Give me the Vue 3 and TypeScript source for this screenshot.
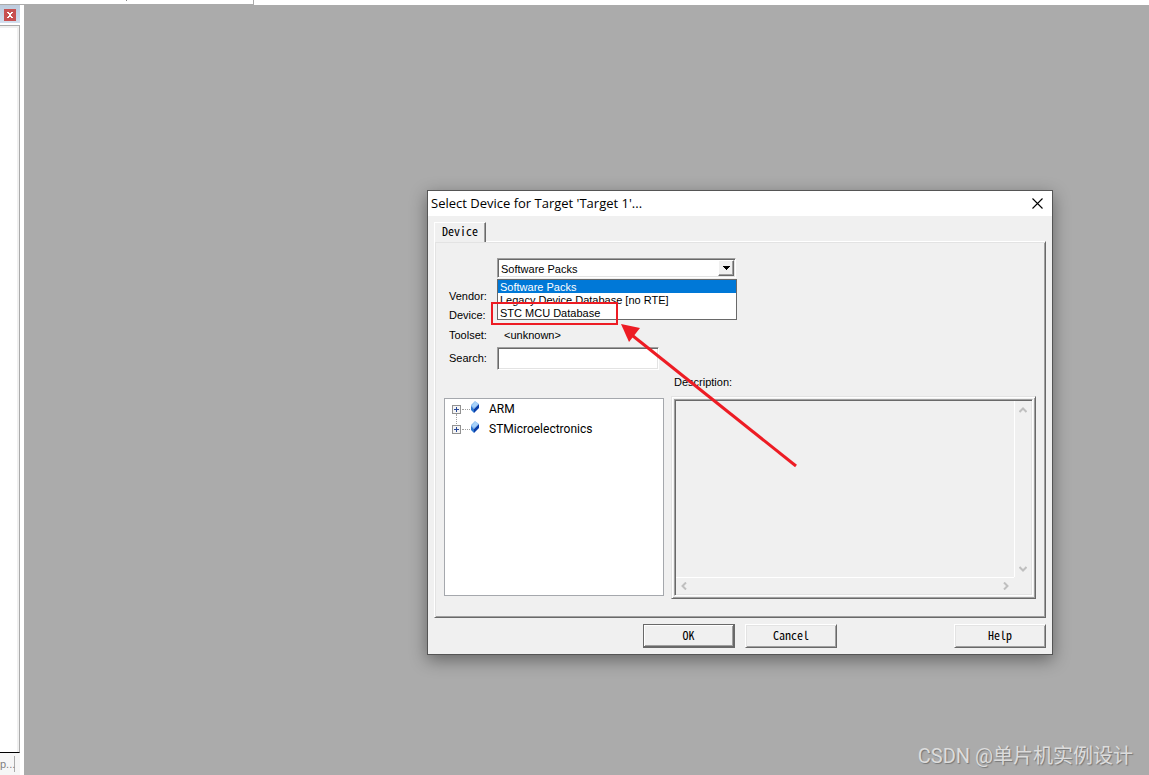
<script setup lang="ts">
import { ref } from 'vue'

const databases = ['Software Packs', 'Legacy Device Database [no RTE]', 'STC MCU Database']
const database = ref(databases[0])
const search = ref('')
const description = ref('')
const vendors = ['ARM', 'STMicroelectronics']
</script>

<template>
  <div class="app">
    <header class="toolbar"><span class="toolbar-part"></span></header>
    <div class="workspace">
      <aside class="dock">
        <div class="dock-title">
          <button class="dock-close" type="button" aria-label="Close panel">
            <svg width="12" height="12" viewBox="0 0 12 12" shape-rendering="crispEdges">
              <path d="M3 3h2v1h2V3h2v1H8v1H7v2h1v1h1v1H7V8H5v1H3V8h1V7h1V5H4V4H3z" fill="#fff" />
            </svg>
          </button>
        </div>
        <div class="dock-body"></div>
        <div class="dock-tabs"><span class="dock-tab">p...</span></div>
      </aside>

      <main class="desktop">
        <section class="dialog" role="dialog" aria-labelledby="dialog-title">
          <div class="titlebar">
            <h1 id="dialog-title">Select Device for Target 'Target 1'...</h1>
            <button class="close" type="button" aria-label="Close">
              <svg width="11" height="11" viewBox="0 0 11 11">
                <path d="M.5 .5l10 10M10.500 .5l-10 10" stroke="#000" stroke-width="1.100" />
              </svg>
            </button>
          </div>

          <div class="body">
            <button class="tab" type="button" role="tab" aria-selected="true">Device</button>
            <div class="panel">
              <div class="form">
                <div class="combo">
                  <select v-model="database" aria-label="Database">
                    <option v-for="d in databases" :key="d">{{ d }}</option>
                  </select>
                  <span class="combo-arrow">
                    <svg width="7" height="4" viewBox="0 0 7 4" shape-rendering="crispEdges">
                      <path d="M0 0h7v1H6v1H5v1H4v1H3V3H2V2H1V1H0z" />
                    </svg>
                  </span>
                  <ul class="options" role="listbox">
                    <li
                      v-for="d in databases"
                      :key="d"
                      role="option"
                      :aria-selected="d === database"
                      :class="{ selected: d === database }"
                      @click="database = d"
                    >{{ d }}</li>
                  </ul>
                </div>
                <span class="label">Vendor:</span>
                <span class="label">Device:</span>
                <span class="label toolset">Toolset:</span>
                <span class="value">&lt;unknown&gt;</span>
                <label class="label" for="search">Search:</label>
                <input id="search" v-model="search" type="text" />
              </div>

              <div class="lists">
                <label class="label desc-label" for="description">Description:</label>
                <ul class="tree" role="tree">
                  <li v-for="v in vendors" :key="v" role="treeitem">
                    <button class="expander" type="button" :aria-label="'Expand ' + v">
                      <svg width="9" height="9" viewBox="0 0 9 9" shape-rendering="crispEdges">
                        <rect width="9" height="9" fill="#919191" />
                        <rect x="1" y="1" width="7" height="7" fill="#f4f4f4" />
                        <path d="M2 4h5v1H2zM4 2h1v5H4z" fill="#2b4a97" />
                      </svg>
                    </button>
                    <span class="dots"></span>
                    <svg class="chip" width="10" height="12" viewBox="0 0 10 12">
                      <path d="M5 0L9 3L4 8L1 6V4z" fill="#8fc0f2" />
                      <path d="M5 .5L8 3L5 6L2 5z" fill="#a9d3fa" />
                      <path d="M9 3V7L4 12V8z" fill="#0a3ea8" />
                      <path d="M1 5L4 8V12L1 9z" fill="#2f78d2" />
                    </svg>
                    <span class="vendor">{{ v }}</span>
                  </li>
                </ul>
                <div class="desc-frame">
                  <div class="desc">
                    <textarea id="description" v-model="description" readonly></textarea>
                    <div class="vscroll">
                      <svg width="8" height="6" viewBox="0 0 8 6"><path d="M.5 5L4 1.500L7.500 5" /></svg>
                      <svg width="8" height="6" viewBox="0 0 8 6"><path d="M.5 1L4 4.500L7.500 1" /></svg>
                    </div>
                    <div class="hscroll">
                      <svg width="6" height="8" viewBox="0 0 6 8"><path d="M5 .5L1.500 4L5 7.500" /></svg>
                      <svg width="6" height="8" viewBox="0 0 6 8"><path d="M1 .5L4.500 4L1 7.500" /></svg>
                    </div>
                  </div>
                </div>
              </div>
            </div>

            <div class="actions">
              <button class="btn default" type="button">OK</button>
              <button class="btn" type="button">Cancel</button>
              <button class="btn help" type="button">Help</button>
            </div>
          </div>

          <div class="marker"></div>
          <svg class="pointer" width="180" height="146" viewBox="0 0 180 146">
            <path d="M8 9L176 143" stroke="#ed1c24" stroke-width="3" />
            <path d="M1 1L20 5L9 19z" fill="#ed1c24" />
          </svg>
        </section>
        <div class="watermark">CSDN @单片机实例设计</div>
      </main>
    </div>
  </div>
</template>

<style>
body {
  margin: 0;
}
</style>

<style scoped>
* {
  box-sizing: border-box;
}
.app {
  display: flex;
  flex-direction: column;
  height: 100vh;
  overflow: hidden;
  background: #fff;
  color: #000;
  font: 11px/16px "Liberation Sans", sans-serif;
}
button {
  padding: 0;
  border: 0;
  background: none;
  color: inherit;
}
ul {
  margin: 0;
  padding: 0;
  list-style: none;
}
svg {
  display: block;
  fill: none;
}
.toolbar {
  flex: none;
  display: flex;
  height: 5px;
}
.toolbar-part {
  width: 254px;
  border-right: 1px solid #ababab;
  border-bottom: 1px solid #ababab;
  background: linear-gradient(#888, #888) 126px 0 / 1px 1px no-repeat;
}
.workspace {
  flex: 1;
  display: flex;
  min-height: 0;
}
.dock {
  flex: none;
  display: flex;
  flex-direction: column;
  width: 24px;
  padding-right: 4px;
}
.dock-title {
  display: flex;
  justify-content: flex-end;
  align-items: center;
  height: 18px;
  padding: 2px 4px 0 0;
  margin-bottom: 2px;
  background: linear-gradient(#bccadc, #d3dfee);
}
.dock-close {
  background: #c75050;
}
.dock-body {
  flex: 1;
  border: solid #ababab;
  border-width: 1px 1px 0 0;
  border-bottom: 1px solid #000;
  box-shadow: inset -2px 2px #f0f0f0;
}
.dock-tabs {
  display: flex;
  height: 22px;
  padding-top: 3px;
  background: #f6f6f6;
}
.dock-tab {
  width: 15px;
  height: 16px;
  border-right: 1px solid #ababab;
  color: #808080;
  font: 11px/16px "Liberation Sans", sans-serif;
  white-space: nowrap;
}
.desktop {
  flex: 1;
  position: relative;
  background: #ababab;
}
.dialog {
  position: absolute;
  left: 403px;
  top: 185px;
  width: 626px;
  border: 1px solid #555;
  background: #f0f0f0;
  box-shadow: 0 5px 16px rgba(0, 0, 0, 0.4);
}
.titlebar {
  display: flex;
  align-items: center;
  justify-content: space-between;
  height: 25px;
  padding: 0 9px 1px 3px;
  background: #fff;
}
h1 {
  margin: 0;
  font: 13px/24px "Open Sans", sans-serif;
}
.body {
  padding: 6px;
}
.tab {
  position: relative;
  display: block;
  width: 52px;
  height: 20px;
  margin-bottom: -1px;
  padding-bottom: 3px;
  border: 1px solid;
  border-width: 1px 1px 0 1px;
  border-color: #fff #696969 #fff #fff;
  background: #f0f0f0;
  box-shadow: inset -1px 0 #a0a0a0;
}
.tab,
.btn {
  font: 12px/16px "Noto Sans Mono CJK SC", "Liberation Mono", monospace;
}
.panel {
  padding: 16px 9px 18px;
  border: 1px solid;
  border-color: #fff #696969 #696969 #fff;
  box-shadow: inset 1px 1px #e3e3e3, inset -1px -1px #a0a0a0;
}
.form {
  display: grid;
  grid-template-columns: 48px 1fr;
  grid-template-rows: 28px 19px 19px 21px 25px;
  align-items: center;
  padding-left: 5px;
}
.label {
  grid-column: 1;
}
.combo {
  grid-column: 2;
  position: relative;
  align-self: start;
  width: 239px;
}
.combo select {
  display: block;
  width: 100%;
  height: 20px;
  padding: 1px 3px 0;
  appearance: none;
  border: 1px solid;
  border-color: #a0a0a0 #fff #fff #a0a0a0;
  border-radius: 0;
  background: #fff;
  box-shadow: inset 1px 1px #696969, inset -1px -1px #e3e3e3;
  color: #000;
  font: inherit;
}
.combo-arrow {
  position: absolute;
  top: 2px;
  right: 2px;
  display: grid;
  place-items: center;
  width: 16px;
  height: 16px;
  border: 1px solid;
  border-color: #fff #696969 #696969 #fff;
  background: #f0f0f0;
  box-shadow: inset -1px -1px #a0a0a0;
  pointer-events: none;
}
.combo-arrow svg {
  fill: #000;
}
.options {
  position: absolute;
  z-index: 1;
  top: 21px;
  left: 0;
  width: 240px;
  border: 1px solid #696969;
  background: #fff;
}
.options li {
  height: 13px;
  padding-left: 2px;
  line-height: 14px;
}
.options .selected {
  background: #0078d7;
  color: #fff;
}
.value {
  grid-column: 2;
  padding-left: 7px;
}
#search {
  align-self: end;
  width: 162px;
  height: 23px;
  padding: 2px 3px;
  border: 1px solid;
  border-color: #a0a0a0 #fff #fff #a0a0a0;
  background: #fff;
  box-shadow: inset 1px 1px #696969, inset -1px -1px #e3e3e3;
  font: inherit;
}
.lists {
  display: grid;
  grid-template-columns: 220px 1fr;
  grid-template-rows: 26px 203px;
  column-gap: 7px;
}
.desc-label {
  grid-column: 2;
  padding: 4px 0 0 3px;
}
.tree {
  margin: 2px 0 3px;
  border: 1px solid #a5a8ad;
  background: #fff;
  font: 12px/20px Roboto, "Open Sans", sans-serif;
}
.tree li {
  display: flex;
  align-items: center;
  height: 20px;
  padding-left: 7px;
}
.tree li + li .expander::before {
  content: "";
  position: absolute;
  left: 4px;
  bottom: 10px;
  height: 10px;
  border-left: 1px dotted #a0a0a0;
}
.expander {
  position: relative;
}
.dots {
  width: 8px;
  margin-left: 1px;
  border-top: 1px dotted #a0a0a0;
}
.chip {
  margin: 0 9px 4px 0;
}
.desc-frame {
  grid-column: 2;
  padding: 2px;
  border: 1px solid;
  border-color: #e3e3e3 #696969 #696969 #e3e3e3;
  box-shadow: inset 1px 1px #fff, inset -1px -1px #a0a0a0;
}
.desc {
  display: grid;
  grid-template-columns: 1fr 17px;
  grid-template-rows: 1fr 17px;
  height: 100%;
  padding: 1px;
  border: 1px solid;
  border-color: #a0a0a0 #fff #fff #a0a0a0;
  box-shadow: inset 1px 1px #696969, inset -1px -1px #e3e3e3;
}
#description {
  width: 100%;
  height: 100%;
  min-width: 0;
  padding: 2px;
  border: 0;
  background: #f0f0f0;
  font: inherit;
  resize: none;
  outline: 0;
}
.desc svg {
  stroke: #bfbfbf;
  stroke-width: 2;
}
.vscroll,
.hscroll {
  display: flex;
  align-items: center;
  justify-content: space-between;
}
.vscroll {
  flex-direction: column;
  padding: 6px 0 5px;
  border-left: 1px solid #fff;
}
.hscroll {
  padding: 0 5px;
  border-top: 1px solid #fff;
}
.actions {
  display: flex;
  gap: 10px;
  padding: 6px 0 0 209px;
}
.btn {
  width: 92px;
  height: 24px;
  padding-bottom: 2px;
  border: 1px solid;
  border-color: #fff #696969 #696969 #fff;
  box-shadow: inset 1px 1px #e3e3e3, inset -1px -1px #a0a0a0;
}
.btn.default {
  border: 2px solid #696969;
  border-width: 1px 2px 2px 1px;
  box-shadow: inset 1px 1px #fff, inset -1px -1px #a0a0a0;
}
.btn.help {
  margin-left: auto;
}
.marker {
  position: absolute;
  z-index: 2;
  left: 63px;
  top: 111px;
  width: 127px;
  height: 23px;
  border: 2px solid #ed1c24;
  pointer-events: none;
}
.pointer {
  position: absolute;
  z-index: 2;
  left: 192px;
  top: 132px;
  pointer-events: none;
}
.watermark {
  position: absolute;
  right: 16px;
  bottom: 5px;
  color: #dcdcdc;
  font: 20px/28px Roboto, "Noto Sans CJK SC", sans-serif;
  text-shadow: 1px 1px 1px #777;
}
</style>
